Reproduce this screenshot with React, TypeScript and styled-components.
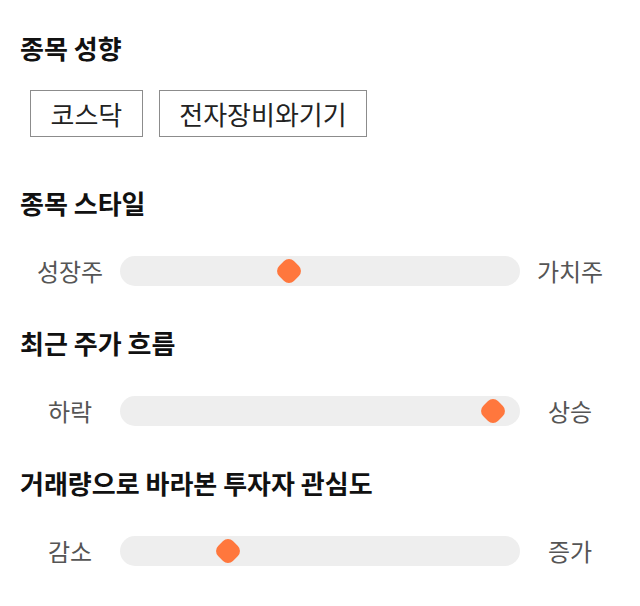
import styled, { createGlobalStyle } from "styled-components";

const GlobalStyle = createGlobalStyle`
  body {
    margin: 0;
    background: #fff;
    font-family: "Noto Sans CJK KR", "Noto Sans", sans-serif;
    color: #111;
  }
`;

const Page = styled.div`
  width: 640px;
  padding: 32px 20px 0;
  box-sizing: border-box;
`;

const Section = styled.section<{ $bottom: number }>`
  display: flex;
  flex-direction: column;
  padding-bottom: ${(p) => p.$bottom}px;
`;

const Heading = styled.h2<{ $gap: number }>`
  margin: 0 0 ${(p) => p.$gap}px;
  font-size: 26px;
  line-height: 32px;
  font-weight: 700;
  color: #111;
`;

const Chips = styled.div`
  display: flex;
  gap: 16px;
  padding-left: 10px;
`;

const Chip = styled.button`
  height: 47px;
  padding: 0 19.5px;
  border: 1px solid #8c8c8c;
  background: #fff;
  font-family: inherit;
  font-size: 26px;
  color: #222;
  cursor: pointer;
`;

const SliderRow = styled.div`
  display: grid;
  grid-template-columns: 80px 1fr 80px;
  align-items: center;
  column-gap: 10px;
  padding: 0 10px;
`;

const EndLabel = styled.span`
  text-align: center;
  font-size: 24px;
  line-height: 30px;
  color: #555;
`;

const Track = styled.div`
  position: relative;
  height: 30px;
  border-radius: 15px;
  background: #eeeeee;
`;

const Thumb = styled.div`
  position: absolute;
  top: 50%;
  width: 21px;
  height: 21px;
  border-radius: 7px;
  background: #ff773d;
  transform: translate(-50%, -50%) rotate(45deg);
`;

type SliderProps = { left: string; right: string; value: number };

function Slider({ left, right, value }: SliderProps) {
  return (
    <SliderRow>
      <EndLabel>{left}</EndLabel>
      <Track>
        <Thumb style={{ left: `${value}%` }} />
      </Track>
      <EndLabel>{right}</EndLabel>
    </SliderRow>
  );
}

const sliders = [
  { title: "종목 스타일", left: "성장주", right: "가치주", value: 42.3 },
  { title: "최근 주가 흐름", left: "하락", right: "상승", value: 93.2 },
  { title: "거래량으로 바라본 투자자 관심도", left: "감소", right: "증가", value: 27 },
];

export default function App() {
  return (
    <Page>
      <GlobalStyle />
      <Section $bottom={50}>
        <Heading $gap={26}>종목 성향</Heading>
        <Chips>
          <Chip>코스닥</Chip>
          <Chip>전자장비와기기</Chip>
        </Chips>
      </Section>
      {sliders.map((s) => (
        <Section key={s.title} $bottom={41}>
          <Heading $gap={37}>{s.title}</Heading>
          <Slider left={s.left} right={s.right} value={s.value} />
        </Section>
      ))}
    </Page>
  );
}
